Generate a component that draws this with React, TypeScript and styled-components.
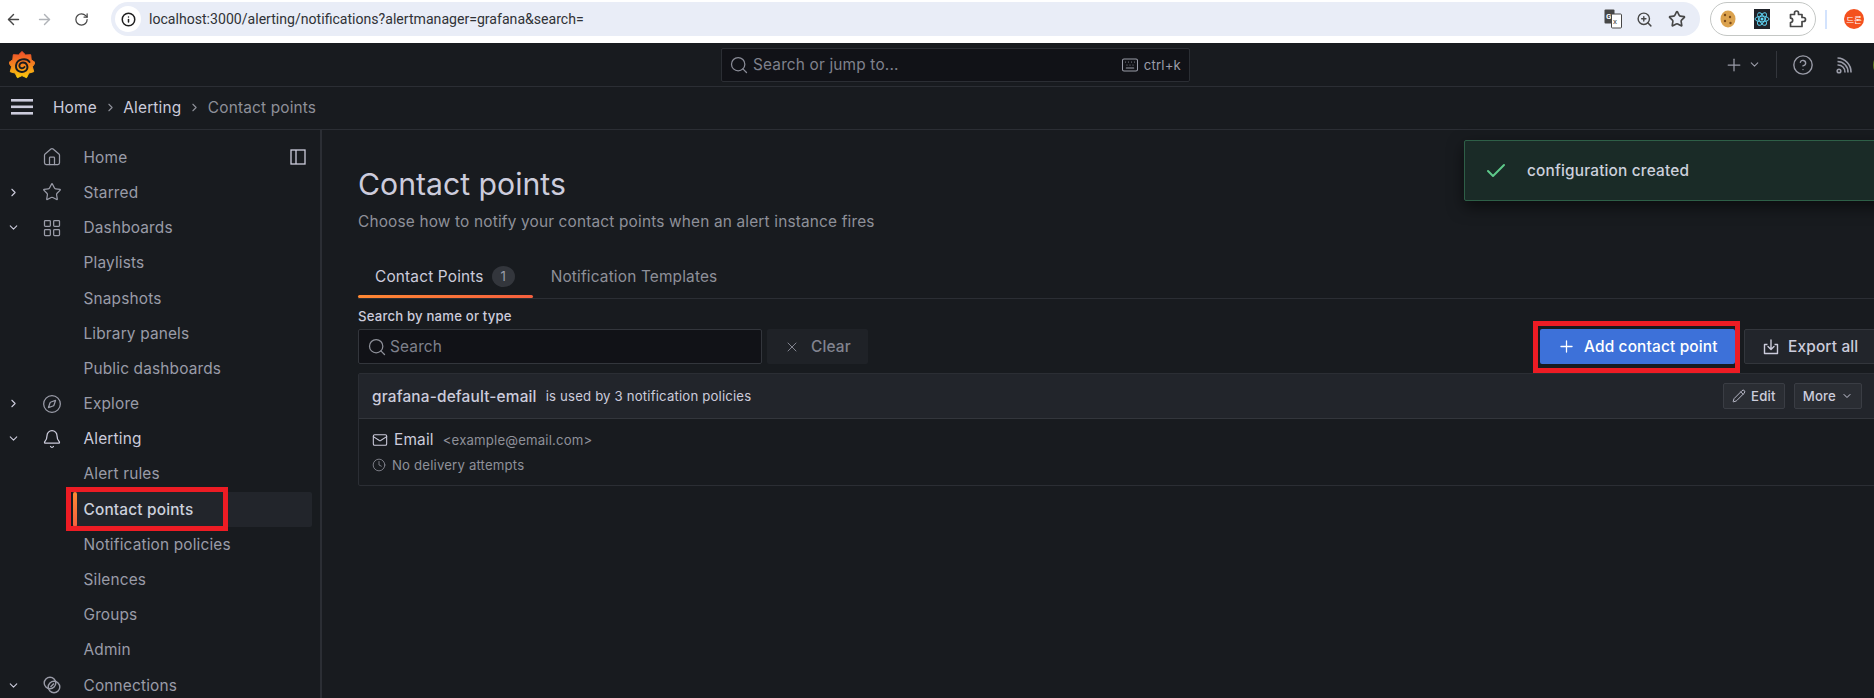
import React from 'react';
import styled, { createGlobalStyle } from 'styled-components';
import {
  ArrowLeft,
  ArrowRight,
  Bell,
  Check,
  ChevronDown,
  ChevronRight,
  CircleHelp,
  Clock,
  Compass,
  Home,
  Info,
  Keyboard,
  LayoutGrid,
  Mail,
  Pencil,
  Plus,
  RotateCw,
  Search,
  Star,
  X,
  ZoomIn,
} from 'lucide-react';

const GlobalStyle = createGlobalStyle`
  html, body {
    margin: 0;
    height: 100%;
    overflow: hidden;
    background: #181b1f;
  }
  * { box-sizing: border-box; }
  body {
    font-family: Inter, "Noto Sans", sans-serif;
    font-size: 15.4px;
    letter-spacing: 0.17px;
    color: #ccccdc;
  }
`;

const Shell = styled.div`
  width: 1874px;
  height: 698px;
  overflow: hidden;
  display: flex;
  flex-direction: column;
  position: relative;
`;

/* browser chrome */
const BrowserBar = styled.div`
  height: 43px;
  flex: none;
  background: #fff;
  display: flex;
  padding-top: 2px;
  color: #474747;
`;
const NavButtons = styled.div`
  width: 111px;
  height: 34px;
  flex: none;
  display: grid;
  grid-template-columns: 26px 36px 38px;
  align-items: center;
  justify-items: center;
`;
const AddressPill = styled.div`
  width: 1589px;
  height: 34px;
  border-radius: 17px;
  background: #e9edf7;
  display: flex;
  align-items: center;
  padding: 0 11px 0 4px;
`;
const InfoDot = styled.span`
  width: 26px;
  height: 26px;
  border-radius: 50%;
  background: #fff;
  color: #1f1f1f;
  display: flex;
  align-items: center;
  justify-content: center;
  margin-right: 8px;
`;
const Url = styled.span`
  font-family: Roboto, "Liberation Sans", sans-serif;
  font-size: 14.1px;
  letter-spacing: 0;
  color: #303236;
  flex: 1;
`;
const PillIcons = styled.div`
  display: grid;
  grid-template-columns: 20px 42px 24px;
  justify-items: center;
  align-items: center;
  color: #474747;
`;
const ExtensionPill = styled.div`
  width: 106px;
  height: 34px;
  margin-left: 10px;
  border: 1px solid #c4c7c5;
  border-radius: 17px;
  display: grid;
  grid-template-columns: 33px 36px 35px;
  justify-items: center;
  align-items: center;
  flex: none;
`;
const ChromeDivider = styled.span`
  width: 2px;
  height: 19px;
  background: #d3e3fd;
  margin: 8px 17px 0 9px;
  flex: none;
`;
const Avatar = styled.span`
  width: 20px;
  height: 20px;
  margin-top: 7px;
  border-radius: 50%;
  background: #f4511e;
  color: #fff;
  font-family: "Noto Sans CJK KR", sans-serif;
  font-size: 8.5px;
  letter-spacing: 0;
  display: flex;
  align-items: center;
  justify-content: center;
  flex: none;
`;

/* grafana top bars */
const TopBar = styled.div`
  height: 44px;
  flex: none;
  display: flex;
  align-items: center;
  border-bottom: 1px solid #2b2e34;
  position: relative;
  padding-left: 9px;
`;
const LogoSlot = styled.span`
  display: flex;
  flex: none;
`;
const SearchCenter = styled.div`
  width: 469px;
  height: 34px;
  flex: none;
  margin-left: 686px;
  background: #111217;
  border: 1px solid #2b2e34;
  border-radius: 2px;
  display: flex;
  align-items: center;
  padding: 0 8px 0 7px;
  color: #8a8c97;
  gap: 4px;
`;
const SearchHint = styled.span`
  flex: 1;
  color: #7f818c;
`;
const ShortcutHint = styled.span`
  display: flex;
  align-items: center;
  gap: 5px;
  font-size: 13.2px;
  color: #9a9ca8;
`;
const TopActions = styled.div`
  display: flex;
  flex: none;
  align-items: center;
  margin-left: 534px;
  color: #9a9ca8;
`;
const AddChevron = styled.span`
  display: flex;
  margin-left: 4px;
`;
const TopDivider = styled.span`
  width: 1px;
  height: 27px;
  background: #33363c;
  margin: 0 15px 0 15px;
`;
const FeedSlot = styled.span`
  display: flex;
  margin-left: 22px;
`;
const UserDot = styled.span`
  flex: none;
  width: 24px;
  height: 24px;
  border-radius: 50%;
  background: #5a7a20;
  margin-left: 21px;
`;
const Crumbs = styled.div`
  height: 43px;
  flex: none;
  display: flex;
  align-items: center;
  border-bottom: 1px solid #2b2e34;
  padding: 0 0 2px 11px;
`;
const MenuSlot = styled.span`
  display: flex;
  margin-right: 20px;
`;
const Crumb = styled.span<{ $current?: boolean }>`
  color: ${(p) => (p.$current ? '#8e9099' : '#ccccdc')};
  white-space: nowrap;
`;
const CrumbSep = styled.span`
  display: flex;
  width: 26.5px;
  justify-content: center;
  color: #8e9099;
`;

/* body */
const Body = styled.div`
  flex: 1;
  min-height: 0;
  display: flex;
`;
const Sidebar = styled.nav`
  width: 322px;
  flex: none;
  border-right: 2px solid #2b2e34;
  padding: 9.7px 8px 0 0;
  overflow: hidden;
`;
const NavRow = styled.div<{ $strong?: boolean }>`
  height: 35.2px;
  display: grid;
  grid-template-columns: 26px 52px 1fr auto;
  align-items: center;
  color: ${(p) => (p.$strong ? '#ccccdc' : '#9a9ca8')};
`;
const Toggle = styled.span`
  display: flex;
  justify-content: center;
  color: #ccccdc;
`;
const NavIcon = styled.span`
  display: flex;
  justify-content: center;
`;
const NavLabel = styled.span<{ $active?: boolean }>`
  position: relative;
  height: 35.2px;
  display: flex;
  align-items: center;
  padding-left: ${(p) => (p.$active ? '10.5px' : '5.5px')};
  margin-left: ${(p) => (p.$active ? '-5px' : '0')};
  background: ${(p) => (p.$active ? '#22252b' : 'transparent')};
  border-radius: 2px;
  color: ${(p) => (p.$active ? '#ccd0dc' : 'inherit')};
  font-weight: ${(p) => (p.$active ? 500 : 400)};
  ${(p) =>
    p.$active
      ? `
    &::before {
      content: '';
      position: absolute;
      left: 0;
      top: 0;
      bottom: 0;
      width: 4px;
      border-radius: 2px;
      background: linear-gradient(0deg, #f55f3e, #ff8833);
    }
    &::after {
      content: '';
      position: absolute;
      left: -7px;
      top: -5px;
      width: 152px;
      height: 34px;
      border: 5px solid #ed1c24;
    }
  `
      : ''}
`;
const DockButton = styled.span`
  display: flex;
  margin-right: 6px;
  color: #ccccdc;
`;

const Main = styled.main`
  width: 1518px;
  flex: none;
  margin-left: 36px;
  padding-top: 35px;
`;
const Title = styled.h1`
  margin: 0 0 7px;
  font-size: 30.2px;
  font-weight: 400;
  letter-spacing: 0;
  line-height: 39px;
  color: #ccccdc;
`;
const Subtitle = styled.p`
  margin: 0;
  line-height: 22px;
  color: #8e9099;
`;
const TabBar = styled.div`
  margin-top: 21px;
  height: 45px;
  display: flex;
  border-bottom: 1px solid #2b2e34;
`;
const Tab = styled.div<{ $active?: boolean }>`
  position: relative;
  height: 44px;
  padding: 0 18px 0 17px;
  margin-left: ${(p) => (p.$active ? '0' : '1px')};
  display: flex;
  align-items: center;
  gap: 8px;
  color: ${(p) => (p.$active ? '#ccccdc' : '#8e9099')};
  ${(p) =>
    p.$active
      ? `
    &::after {
      content: '';
      position: absolute;
      left: 0;
      right: 0;
      bottom: 0;
      height: 3px;
      border-radius: 2px;
      background: linear-gradient(90deg, #ff8833, #f55f3e);
    }
  `
      : ''}
`;
const Badge = styled.span`
  width: 23px;
  height: 21px;
  border-radius: 50%;
  background: #33363c;
  color: #9a9ca8;
  font-size: 13.2px;
  display: flex;
  align-items: center;
  justify-content: center;
`;
const FieldLabel = styled.label`
  display: block;
  margin-top: 8px;
  font-size: 13.2px;
  font-weight: 500;
  line-height: 18px;
  color: #ccccdc;
`;
const Toolbar = styled.div`
  margin-top: 4px;
  display: flex;
  height: 35px;
`;
const SearchInput = styled.div`
  width: 404px;
  background: #111217;
  border: 1px solid #33363c;
  border-radius: 2px;
  display: flex;
  align-items: center;
  gap: 3px;
  padding: 0 8px;
  color: #8e9099;
`;
const Placeholder = styled.span`
  color: #7f818c;
`;
const ClearButton = styled.div`
  width: 101px;
  margin-left: 5px;
  background: #1f2227;
  border-radius: 2px;
  display: flex;
  align-items: center;
  gap: 11px;
  padding-left: 17px;
  color: #82848f;
  font-weight: 500;
`;
const AddButton = styled.div`
  position: relative;
  width: 195px;
  margin-left: auto;
  background: #3d71d9;
  color: #fff;
  border-radius: 2px;
  display: flex;
  align-items: center;
  gap: 8px;
  padding-left: 17px;
  font-weight: 500;
  &::after {
    content: '';
    position: absolute;
    left: -7px;
    right: -5px;
    top: -8px;
    bottom: -9px;
    border: 5px solid #ed1c24;
  }
`;
const ExportButton = styled.div`
  width: 132px;
  margin-left: 9px;
  background: #22252b;
  border: 1px solid #33363c;
  border-radius: 2px;
  display: flex;
  align-items: center;
  gap: 9px;
  padding-left: 18px;
  color: #ccccdc;
  font-weight: 500;
`;
const Card = styled.section`
  margin-top: 9px;
  border: 1px solid #2b2e34;
  border-radius: 2px;
`;
const CardHeader = styled.header`
  height: 45px;
  background: #22252b;
  border-bottom: 1px solid #33363c;
  display: flex;
  align-items: center;
  padding: 0 13px 0 13px;
`;
const CardName = styled.span`
  font-weight: 500;
  color: #ccccdc;
`;
const CardNote = styled.span`
  margin-left: 9px;
  font-size: 13.2px;
  color: #ccccdc;
  flex: 1;
`;
const SmallButton = styled.div`
  height: 26px;
  margin-left: 9px;
  padding: 0 8px;
  display: flex;
  align-items: center;
  gap: 5px;
  font-size: 13.2px;
  font-weight: 500;
  color: #ccccdc;
  background: #2a2d33;
  border: 1px solid #3a3d44;
  border-radius: 2px;
`;
const CardBody = styled.div`
  height: 66px;
  padding: 10px 13px 0;
`;
const ContactLine = styled.div`
  display: flex;
  align-items: center;
  height: 21px;
`;
const ContactType = styled.span`
  margin-left: 6px;
  color: #ccccdc;
`;
const ContactAddress = styled.span`
  margin-left: 9px;
  font-size: 13.2px;
  color: #8e9099;
`;
const DeliveryLine = styled.div`
  display: flex;
  align-items: center;
  gap: 6px;
  margin-top: 4px;
  height: 21px;
  font-size: 13.2px;
  color: #8e9099;
`;

const Toast = styled.div`
  position: absolute;
  left: 1464px;
  top: 140px;
  width: 470px;
  height: 61px;
  background: #1a2b27;
  border: 1px solid #2e5f47;
  border-radius: 2px;
  box-shadow: 0 6px 16px rgba(0, 0, 0, 0.55);
  display: flex;
  align-items: center;
  padding-left: 19px;
  gap: 19px;
  color: #ccd0dc;
  font-weight: 500;
`;

const GrafanaLogo = () => {
  const pts: string[] = [];
  for (let i = 0; i < 18; i++) {
    const a = (i / 18) * Math.PI * 2 - Math.PI / 2;
    const r = i % 2 === 0 ? 13.5 : 10.6;
    pts.push(`${(13 + r * Math.cos(a)).toFixed(1)},${(14 + r * Math.sin(a)).toFixed(1)}`);
  }
  return (
    <svg width="26" height="28" viewBox="0 0 26 28">
      <defs>
        <linearGradient id="gf" x1="0" y1="0" x2="0" y2="1">
          <stop offset="0" stopColor="#ee4f2a" />
          <stop offset="0.5" stopColor="#f5821f" />
          <stop offset="1" stopColor="#fbca0a" />
        </linearGradient>
      </defs>
      <polygon points={pts.join(' ')} fill="url(#gf)" stroke="url(#gf)" strokeLinejoin="round" />
      <path
        d="M20.5 11 C17.5 6.5 8 7.5 7 14.5 C6.5 20.5 13 22.5 17 19.5 C20 16.5 18 11.5 14 11.5 C11 11.5 10 14 10.5 15.5 C11 17.5 14 18 15.5 16"
        fill="none"
        stroke="#181b1f"
        strokeWidth="1.9"
        strokeLinecap="round"
      />
    </svg>
  );
};

const TranslateIcon = () => (
  <svg width="18" height="20" viewBox="0 0 18 20">
    <rect x="0.5" y="0.5" width="10" height="14" rx="1" fill="#474747" />
    <text x="2" y="10" fontSize="8" fontFamily="Roboto" fontWeight="700" fill="#fff">G</text>
    <rect x="7.5" y="5" width="10" height="14" rx="1" fill="#fff" stroke="#474747" />
    <text x="9" y="15" fontSize="8" fontFamily="Roboto" fill="#474747">x</text>
  </svg>
);

const CookieIcon = () => (
  <svg width="16" height="18" viewBox="0 0 16 18">
    <ellipse cx="8" cy="9" rx="7.5" ry="8.5" fill="#dba24e" />
    <circle cx="5" cy="5" r="1.2" fill="#7a4a1a" />
    <circle cx="10" cy="7" r="1.2" fill="#7a4a1a" />
    <circle cx="5" cy="11" r="1.2" fill="#7a4a1a" />
    <circle cx="10.5" cy="13" r="1.2" fill="#7a4a1a" />
  </svg>
);

const ReactIcon = () => (
  <svg width="16" height="20" viewBox="0 0 16 20">
    <rect width="16" height="20" fill="#20232a" />
    <g fill="none" stroke="#61dafb" strokeWidth="0.9">
      <ellipse cx="8" cy="10" rx="7" ry="2.8" />
      <ellipse cx="8" cy="10" rx="7" ry="2.8" transform="rotate(60 8 10)" />
      <ellipse cx="8" cy="10" rx="7" ry="2.8" transform="rotate(120 8 10)" />
    </g>
    <circle cx="8" cy="10" r="1.5" fill="#61dafb" />
  </svg>
);

const ExtensionIcon = () => (
  <svg width="18" height="18" viewBox="0 0 18 18" fill="none" stroke="#474747" strokeWidth="1.7" strokeLinejoin="round">
    <path d="M1.5 4.5 H5.5 V3 a2 2 0 0 1 4 0 V4.5 H13 V7.5 H14.5 a2 2 0 0 1 0 4 H13 V16.5 H1.5 V12.5 a2.2 2.2 0 0 0 0 -4.4 Z" />
  </svg>
);

const Hamburger = () => (
  <svg width="22" height="16" viewBox="0 0 22 16">
    <rect y="0" width="22" height="2.6" fill="#ccccdc" />
    <rect y="6.5" width="22" height="2.6" fill="#ccccdc" />
    <rect y="13" width="22" height="2.6" fill="#ccccdc" />
  </svg>
);

const DockIcon = () => (
  <svg width="16" height="16" viewBox="0 0 16 16" fill="none" stroke="currentColor" strokeWidth="1.3">
    <rect x="1" y="1" width="14" height="14" />
    <line x1="6" y1="1" x2="6" y2="15" />
  </svg>
);

const ConnectionsIcon = () => (
  <svg width="18" height="18" viewBox="0 0 18 18" fill="none" stroke="currentColor" strokeWidth="1.4">
    <circle cx="7" cy="7" r="5.8" />
    <circle cx="11" cy="11" r="5.8" />
    <path d="M7.5 11 L11 7.5" />
  </svg>
);

const ImportIcon = () => (
  <svg width="16" height="16" viewBox="0 0 16 16" fill="none" stroke="currentColor" strokeWidth="1.4">
    <path d="M4.5 5.5 H1.5 V14.5 H14.5 V5.5 H11.5" strokeLinejoin="round" />
    <path d="M8 1 V10 M5 7.5 L8 10.5 L11 7.5" strokeLinecap="round" strokeLinejoin="round" />
  </svg>
);

const RssIcon = () => (
  <svg width="16" height="18" viewBox="0 0 16 18" fill="none" stroke="currentColor" strokeWidth="1.6">
    <circle cx="3" cy="15" r="1.8" />
    <path d="M1.5 9 A7 7 0 0 1 9 16.5" />
    <path d="M1.5 5.5 A10.5 10.5 0 0 1 12 16.5" />
    <path d="M1.5 2 A14 14 0 0 1 15 16.5" />
  </svg>
);

type NavItem = {
  label: string;
  icon?: React.ReactNode;
  toggle?: 'right' | 'down';
  strong?: boolean;
  active?: boolean;
};

const iconProps = { size: 20, strokeWidth: 1.5 };

const navItems: NavItem[] = [
  { label: 'Home', icon: <Home {...iconProps} /> },
  { label: 'Starred', icon: <Star {...iconProps} />, toggle: 'right' },
  { label: 'Dashboards', icon: <LayoutGrid {...iconProps} />, toggle: 'down' },
  { label: 'Playlists' },
  { label: 'Snapshots' },
  { label: 'Library panels' },
  { label: 'Public dashboards' },
  { label: 'Explore', icon: <Compass {...iconProps} />, toggle: 'right' },
  { label: 'Alerting', icon: <Bell {...iconProps} />, toggle: 'down', strong: true },
  { label: 'Alert rules' },
  { label: 'Contact points', active: true },
  { label: 'Notification policies' },
  { label: 'Silences' },
  { label: 'Groups' },
  { label: 'Admin' },
  { label: 'Connections', icon: <ConnectionsIcon />, toggle: 'down' },
];

const App = (): JSX.Element => {
  return (
    <Shell>
      <GlobalStyle />
      <BrowserBar>
        <NavButtons>
          <ArrowLeft size={17} />
          <ArrowRight size={17} color="#b0b3b8" />
          <RotateCw size={15} />
        </NavButtons>
        <AddressPill>
          <InfoDot>
            <Info size={15} strokeWidth={2.4} />
          </InfoDot>
          <Url>localhost:3000/alerting/notifications?alertmanager=grafana&amp;search=</Url>
          <PillIcons>
            <TranslateIcon />
            <ZoomIn size={17} />
            <Star size={18} strokeWidth={2.2} />
          </PillIcons>
        </AddressPill>
        <ExtensionPill>
          <CookieIcon />
          <ReactIcon />
          <ExtensionIcon />
        </ExtensionPill>
        <ChromeDivider />
        <Avatar>드론</Avatar>
      </BrowserBar>

      <TopBar>
        <LogoSlot>
          <GrafanaLogo />
        </LogoSlot>
        <SearchCenter>
          <Search size={20} strokeWidth={1.5} />
          <SearchHint>Search or jump to...</SearchHint>
          <ShortcutHint>
            <Keyboard size={18} strokeWidth={1.4} />
            ctrl+k
          </ShortcutHint>
        </SearchCenter>
        <TopActions>
          <Plus size={20} strokeWidth={1.5} />
          <AddChevron>
            <ChevronDown size={13} />
          </AddChevron>
          <TopDivider />
          <CircleHelp size={22} strokeWidth={1.5} />
          <FeedSlot>
            <RssIcon />
          </FeedSlot>
          <UserDot />
        </TopActions>
      </TopBar>

      <Crumbs>
        <MenuSlot>
          <Hamburger />
        </MenuSlot>
        <Crumb>Home</Crumb>
        <CrumbSep>
          <ChevronRight size={13} />
        </CrumbSep>
        <Crumb>Alerting</Crumb>
        <CrumbSep>
          <ChevronRight size={13} />
        </CrumbSep>
        <Crumb $current>Contact points</Crumb>
      </Crumbs>

      <Body>
        <Sidebar>
          {navItems.map((item) => (
            <NavRow key={item.label} $strong={item.strong}>
              <Toggle>
                {item.toggle === 'right' && <ChevronRight size={13} strokeWidth={2} />}
                {item.toggle === 'down' && <ChevronDown size={13} strokeWidth={2} />}
              </Toggle>
              <NavIcon>{item.icon}</NavIcon>
              <NavLabel $active={item.active}>{item.label}</NavLabel>
              {item.label === 'Home' && (
                <DockButton>
                  <DockIcon />
                </DockButton>
              )}
            </NavRow>
          ))}
        </Sidebar>

        <Main>
          <Title>Contact points</Title>
          <Subtitle>Choose how to notify your contact points when an alert instance fires</Subtitle>
          <TabBar>
            <Tab $active>
              Contact Points
              <Badge>1</Badge>
            </Tab>
            <Tab>Notification Templates</Tab>
          </TabBar>
          <FieldLabel>Search by name or type</FieldLabel>
          <Toolbar>
            <SearchInput>
              <Search size={20} strokeWidth={1.5} />
              <Placeholder>Search</Placeholder>
            </SearchInput>
            <ClearButton>
              <X size={16} strokeWidth={1.5} />
              Clear
            </ClearButton>
            <AddButton>
              <Plus size={19} strokeWidth={1.6} />
              Add contact point
            </AddButton>
            <ExportButton>
              <ImportIcon />
              Export all
            </ExportButton>
          </Toolbar>
          <Card>
            <CardHeader>
              <CardName>grafana-default-email</CardName>
              <CardNote>is used by 3 notification policies</CardNote>
              <SmallButton>
                <Pencil size={14} strokeWidth={1.5} />
                Edit
              </SmallButton>
              <SmallButton>
                More
                <ChevronDown size={12} />
              </SmallButton>
            </CardHeader>
            <CardBody>
              <ContactLine>
                <Mail size={16} strokeWidth={1.6} />
                <ContactType>Email</ContactType>
                <ContactAddress>&lt;example@email.com&gt;</ContactAddress>
              </ContactLine>
              <DeliveryLine>
                <Clock size={14} strokeWidth={1.4} />
                No delivery attempts
              </DeliveryLine>
            </CardBody>
          </Card>
        </Main>
      </Body>

      <Toast>
        <Check size={24} color="#5ec98a" strokeWidth={2} />
        configuration created
      </Toast>
    </Shell>
  );
};

export default App;
